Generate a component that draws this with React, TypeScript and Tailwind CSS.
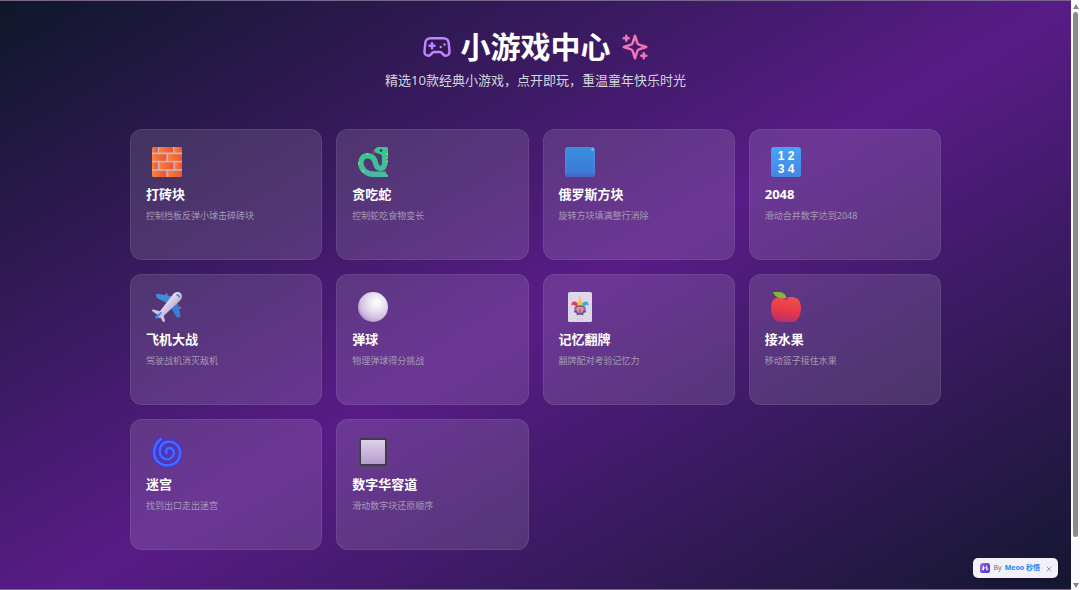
import React from 'react';
import { Gamepad2 } from 'lucide-react';

interface Game {
    id: string;
    title: string;
    description: string;
    icon: React.ReactNode;
}

const iconClass = 'ml-1.5 size-[30px]';

const BrickIcon = () => (
    <svg viewBox="0 0 30 30" className={iconClass} aria-hidden="true">
        <defs>
            <linearGradient id="brick" x1="0" y1="0" x2="1" y2="0">
                <stop offset="0" stopColor="#fb8137" />
                <stop offset="1" stopColor="#ee5236" />
            </linearGradient>
            <clipPath id="brickClip"><rect width="30" height="30" rx="2.5" /></clipPath>
        </defs>
        <g clipPath="url(#brickClip)">
            <rect width="30" height="30" fill="#cbb5c0" />
            <g fill="url(#brick)">
                <rect x="0" y="0" width="5.8" height="5.5" />
                <rect x="7" y="0" width="14" height="5.5" />
                <rect x="22.4" y="0" width="7.6" height="5.5" />
                <rect x="0" y="7.2" width="14.3" height="6.6" />
                <rect x="15.8" y="7.2" width="14.2" height="6.6" />
                <rect x="0" y="15.4" width="5.8" height="6.8" />
                <rect x="7.4" y="15.4" width="14" height="6.8" />
                <rect x="22.8" y="15.4" width="7.2" height="6.8" />
                <rect x="0" y="23.8" width="14.3" height="6.2" />
                <rect x="15.8" y="23.8" width="14.2" height="6.2" />
            </g>
        </g>
    </svg>
);

const SnakeIcon = () => (
    <svg viewBox="0 0 30 30" className={iconClass} aria-hidden="true">
        <defs>
            <linearGradient id="snake" x1="0" y1="0" x2="0" y2="1">
                <stop offset="0" stopColor="#35c98f" />
                <stop offset="1" stopColor="#48b8a0" />
            </linearGradient>
        </defs>
        <path d="M17.5 5l-2.6-1.6M17.5 5l-2.2 1.4" stroke="#e8335c" strokeWidth="1.3" fill="none" />
        <path
            d="M26.600 4V16C26.600 22.500 19.500 23.300 18 17.500C17 12.500 14.500 8.800 9.800 8.800C5 8.800 2.800 12.500 2.800 16C2.800 23 9 27 15 27.300H28"
            fill="none"
            stroke="url(#snake)"
            strokeWidth="5.4"
        />
        <path d="M16.500 3.600C16.500 1.200 18.500 0 21.500 0H28.500C29.500 0 30 .6 30 1.600V9h-6.100C23.500 6.500 17.500 7.400 16.500 3.600z" fill="#36c88f" />
        <path d="M22 24.600l8 3v2.400h-9z" fill="#43bd9b" />
        <path d="M29.200 6v12" stroke="#e4d43c" strokeWidth="1.3" strokeDasharray="1.8 2" />
        <path d="M4.500 23.500l1.500 1.500M.8 15.500v2M8.500 6.800l2-.3" stroke="#c5d747" strokeWidth="1.2" />
        <circle cx="23" cy="3.500" r="1.200" fill="#33264d" />
    </svg>
);

const BlueSquareIcon = () => (
    <svg viewBox="0 0 30 30" className={iconClass} aria-hidden="true">
        <defs>
            <linearGradient id="blueSquare" x1="0" y1="0" x2="0" y2="1">
                <stop offset="0" stopColor="#3a8ee0" />
                <stop offset=".8" stopColor="#3c7cd6" />
                <stop offset="1" stopColor="#4866c6" />
            </linearGradient>
        </defs>
        <rect width="30" height="30" rx="2.8" fill="url(#blueSquare)" />
        <path d="M1 3v24M29 3v24" stroke="#5b93df" strokeOpacity=".5" />
        <circle cx="27.6" cy="2.6" r="1.4" fill="#70b9f5" />
    </svg>
);

const NumbersIcon = () => (
    <svg viewBox="0 0 30 30" className={`${iconClass} font-['Liberation_Sans',sans-serif]`} aria-hidden="true">
        <defs>
            <linearGradient id="numbers" x1="0" y1="0" x2="0" y2="1">
                <stop offset="0" stopColor="#45a4f5" />
                <stop offset="1" stopColor="#4386e4" />
            </linearGradient>
        </defs>
        <rect width="30" height="30" rx="2.8" fill="url(#numbers)" />
        <g fill="#fff" fontSize="12" fontWeight="700" textAnchor="middle">
            <text x="10" y="13">1</text>
            <text x="20" y="13">2</text>
            <text x="10" y="26">3</text>
            <text x="20" y="26">4</text>
        </g>
    </svg>
);

const PlaneIcon = () => (
    <svg viewBox="0 0 30 30" className={iconClass} aria-hidden="true">
        <defs>
            <linearGradient id="plane" x1="0" y1="0" x2="1" y2="1">
                <stop offset=".3" stopColor="#eee5f4" />
                <stop offset=".75" stopColor="#b5a0c9" />
            </linearGradient>
        </defs>
        <path d="M13.5 1.2l2 .2v3l-2-.6zM26.3 14.5l2.6.2v2.4l-2-.3z" fill="#8a7ba2" />
        <path d="M4.2 3.4c-.3-1 .4-1.6 1.4-1.6L20 4.4l-5.6 6.4L5.600 6.200c-.8-.5-1.200-1.600-1.400-2.800z" fill="#3c8ee2" />
        <path d="M25.200 9.400l3.300 13.700c.2 1.200-.4 2.400-1.800 2.500-1.300.2-2.300-.3-2.800-1.300L18.500 15z" fill="#397fd6" />
        <path d="M0 18.500c0-.8.7-1 1.500-.9l7.300 1.900 2.400 2.600 1.700 6.500c.2.8-.2 1.400-1 1.400s-1.200-.6-1.600-1.300L8 24.600l-2.400-1.800-4.300-2.900c-.7-.4-1.200-.8-1.300-1.400z" fill="#cec0df" />
        <path d="M21.500 1.800c2.200-2 5.300-2.300 7.200-.5 1.900 1.900 1.600 4.800-.4 6.900L12.200 23.400c-2 1.800-4.800 2.800-6.100 2.200-1.200-1.100-.1-3.900 1.600-6z" fill="url(#plane)" />
        <path d="M3.400 24.500l5.100-4.400c.8-.4 1.600.4 1.200 1.200l-4.400 5.200c-1.300 1-2.900-.8-1.900-2z" fill="#3c8ee2" />
        <path d="M24.300 2.600c1.700.1 3 1.200 3.300 3" stroke="#3781c4" strokeWidth="1.4" fill="none" />
    </svg>
);

const BallIcon = () => (
    <svg viewBox="0 0 30 30" className={iconClass} aria-hidden="true">
        <defs>
            <radialGradient id="ball" cx=".62" cy=".35" r=".68">
                <stop offset="0" stopColor="#fff" />
                <stop offset=".45" stopColor="#e8dff0" />
                <stop offset=".8" stopColor="#cebfdc" />
                <stop offset="1" stopColor="#b392d2" />
            </radialGradient>
        </defs>
        <circle cx="15" cy="15" r="15" fill="url(#ball)" />
    </svg>
);

const JokerIcon = () => (
    <svg viewBox="0 0 30 30" className={iconClass} aria-hidden="true">
        <rect x="3" width="24" height="30" rx="1.600" fill="#ded7e7" />
        <path d="M14 14C12.600 9.500 8.500 8.500 6.900 10.700L6.300 13.600l2.700-.8 2.200 2.600z" fill="#e23c62" />
        <path d="M16 14c1.400-4.500 5.500-5.500 7.100-3.300l.6 2.900-2.700-.8-2.200 2.600z" fill="#36a9df" />
        <path d="M15 5.500c1.200 2.600 2.500 5 2.600 8.500h-5.200c.1-3.500 1.400-5.900 2.600-8.500z" fill="#f5c343" />
        <path d="M9.500 18l-.6 2.200 2.300.5.8 2.800 2.100-1 .9.8.9-.8 2.100 1 .8-2.800 2.300-.5-.6-2.200z" fill="#58569d" />
        <circle cx="10.500" cy="16.500" r="1.400" fill="#8964a2" />
        <circle cx="19.500" cy="16.500" r="1.400" fill="#8964a2" />
        <circle cx="15" cy="17.500" r="3.400" fill="#ef8d91" />
        <path d="M11.400 14.200c2.200-1.200 5-1.200 7.200 0v1.300c-2.200-1-5-1-7.200 0z" fill="#6558a1" />
        <circle cx="15" cy="17.800" r=".9" fill="#d93250" />
        <path d="M13.600 19.600c.9.600 1.900.6 2.800 0" stroke="#a12c4d" strokeWidth=".8" fill="none" />
        <circle cx="15" cy="5.500" r=".9" fill="#f5c343" />
        <path d="M12 27h6" stroke="#b8aac7" strokeWidth=".8" strokeDasharray="1 1.5" />
    </svg>
);

const AppleIcon = () => (
    <svg viewBox="0 0 30 30" className={iconClass} aria-hidden="true">
        <defs>
            <linearGradient id="apple" x1=".6" y1="0" x2=".4" y2="1">
                <stop offset="0" stopColor="#f0504e" />
                <stop offset=".6" stopColor="#e6364b" />
                <stop offset="1" stopColor="#b8306c" />
            </linearGradient>
        </defs>
        <path d="M15 6.300c2-1.200 4.500-1.700 7-1.200 5 .8 8 4.600 8 10.300 0 7.600-3.600 14.600-9 14.600H9C3.600 30 0 23 0 15.400 0 9.700 3 5.900 8 5.100c2.500-.5 5 0 7 1.200z" fill="url(#apple)" />
        <path d="M11.500 6.100c2.200.8 4.800.8 7 0-1.800 2.400-5.200 2.400-7 0z" fill="#aa2942" />
        <path d="M2 .2C8.500-.8 14.300.2 15.400 6 9 6.500 4.500 6 2 .2z" fill="#7db93d" />
    </svg>
);

const CycloneIcon = () => {
    const spiral = 'M9 2C1.500 7.500 0 18.500 5.500 24.300C12 30.500 23.500 29.300 27 21.500C30.500 13 25.300 4.800 17 4.800C10.200 4.800 6.800 10.600 8 16C9.300 22 16.300 24.500 20.300 20C23.500 16 21.300 11 17.500 11C14.300 11 13.300 13.800 14.600 16';
    return (
        <svg viewBox="0 0 30 30" className={iconClass} aria-hidden="true" fill="none" strokeLinecap="round">
            <path d={spiral} stroke="#3a38dc" strokeWidth="4.600" />
            <path d={spiral} stroke="#4968ff" strokeWidth="2.400" />
        </svg>
    );
};

const SquareButtonIcon = () => (
    <svg viewBox="0 0 30 30" className={iconClass} aria-hidden="true">
        <defs>
            <linearGradient id="squareButton" x1="0" y1="0" x2="0" y2="1">
                <stop offset="0" stopColor="#ddd2e8" />
                <stop offset="1" stopColor="#b59cce" />
            </linearGradient>
        </defs>
        <rect x=".5" width="29.500" height="30" rx="1.500" fill="#5a4670" />
        <rect x="1.500" y="1" width="27.500" height="28" rx="1" fill="#453851" />
        <rect x="3" y="3" width="24" height="24" fill="url(#squareButton)" />
    </svg>
);

const SparklesIcon = () => (
    <svg
        viewBox="0 0 24 24"
        className="size-[30px] text-[#f472b6]"
        fill="none"
        stroke="currentColor"
        strokeWidth="2"
        strokeLinecap="round"
        strokeLinejoin="round"
        aria-hidden="true"
    >
        <path d="m12 3-1.912 5.813a2 2 0 0 1-1.275 1.275L3 12l5.813 1.912a2 2 0 0 1 1.275 1.275L12 21l1.912-5.813a2 2 0 0 1 1.275-1.275L21 12l-5.813-1.912a2 2 0 0 1-1.275-1.275L12 3Z" />
        <path d="M5 3v4M19 17v4M3 5h4M17 19h4" />
    </svg>
);

const games: Game[] = [
    { id: 'brick', title: '打砖块', description: '控制挡板反弹小球击碎砖块', icon: <BrickIcon /> },
    { id: 'snake', title: '贪吃蛇', description: '控制蛇吃食物变长', icon: <SnakeIcon /> },
    { id: 'tetris', title: '俄罗斯方块', description: '旋转方块填满整行消除', icon: <BlueSquareIcon /> },
    { id: '2048', title: '2048', description: '滑动合并数字达到2048', icon: <NumbersIcon /> },
    { id: 'plane', title: '飞机大战', description: '驾驶战机消灭敌机', icon: <PlaneIcon /> },
    { id: 'pinball', title: '弹球', description: '物理弹球得分挑战', icon: <BallIcon /> },
    { id: 'memory', title: '记忆翻牌', description: '翻牌配对考验记忆力', icon: <JokerIcon /> },
    { id: 'fruit', title: '接水果', description: '移动篮子接住水果', icon: <AppleIcon /> },
    { id: 'maze', title: '迷宫', description: '找到出口走出迷宫', icon: <CycloneIcon /> },
    { id: 'puzzle', title: '数字华容道', description: '滑动数字块还原顺序', icon: <SquareButtonIcon /> },
];

const GameCard = ({ game }: { game: Game }) => (
    <button
        type="button"
        className="flex min-h-[131px] cursor-pointer flex-col items-start rounded-xl border border-white/8 bg-white/12 px-[15px] pt-[17px] pb-4 text-left hover:bg-white/20"
    >
        {game.icon}
        <span className="mt-2 text-[13px] leading-[18px] font-bold text-white">{game.title}</span>
        <span className="mt-1.5 text-[9px] leading-[14px] text-[#a39bb3]">{game.description}</span>
    </button>
);

const MeooBadge = () => (
    <div className="absolute right-[13px] bottom-[11px] flex h-5 items-center rounded-[5px] bg-[#f2f1f8] pr-1.5 pl-[7px] text-[7px] shadow-md">
        <svg viewBox="0 0 20 20" className="mr-1 size-2.5" aria-hidden="true">
            <defs>
                <linearGradient id="meoo" x1="0" y1="0" x2="1" y2="1">
                    <stop offset="0" stopColor="#d07bd0" />
                    <stop offset=".4" stopColor="#6a49dc" />
                    <stop offset="1" stopColor="#5334c4" />
                </linearGradient>
            </defs>
            <rect width="20" height="20" rx="5" fill="url(#meoo)" />
            <path d="M4 14c1.500-2 2.500-5 3-8v8M7 11c3-2 5-2 7-1M13.500 6v8c1 0 2-.5 3-1.500" fill="none" stroke="#fff" strokeWidth="2" strokeLinecap="round" />
        </svg>
        <a href="#meoo" className="flex items-center gap-[3px]">
            <span className="text-gray-500">By</span>
            <span className="font-bold text-[#1a85f0]">Meoo 秒悟</span>
        </a>
        <button type="button" aria-label="关闭" className="ml-1.5 cursor-pointer text-gray-400">
            <svg viewBox="0 0 6 6" className="mt-0.5 size-1.5" stroke="currentColor" strokeWidth="1" aria-hidden="true">
                <path d="M.7.7l4.600 4.600M5.300.7L.7 5.300" />
            </svg>
        </button>
    </div>
);

const PageScrollbar = () => (
    <div className="flex w-[9px] shrink-0 flex-col items-center bg-[#fbfafc] pt-1 pb-0.5" aria-hidden="true">
        <svg viewBox="0 0 6 5" className="h-[5px] w-1.5 fill-[#858585]"><path d="M3 0l3 5H0z" /></svg>
        <div className="mt-[3px] flex w-full flex-1 flex-col items-center">
            <div className="h-[92%] w-[5px] rounded-full bg-[#8b8b8b]" />
        </div>
        <svg viewBox="0 0 6 5" className="h-[5px] w-1.5 fill-[#858585]"><path d="M3 5L0 0h6z" /></svg>
    </div>
);

export default function App() {
    return (
        <div className="flex h-screen overflow-hidden font-['Noto_Sans','Noto_Sans_CJK_SC',sans-serif]">
            <div className="relative flex-1 overflow-hidden border-y border-[#77678f]">
                <main className="min-h-[106vh] bg-linear-to-br/srgb from-[#0f172a] via-[#581c87] to-[#0f172a] px-8 pt-6">
                    <header className="text-center">
                        <h1 className="flex items-center justify-center gap-[9px] text-[30px] leading-[44px] font-bold text-white">
                            <Gamepad2 size={30} className="text-[#c084fc]" aria-hidden="true" />
                            小游戏中心
                            <SparklesIcon />
                        </h1>
                        <p className="mt-0.5 text-[13px] leading-[18px] text-gray-300">
                            精选10款经典小游戏，点开即玩，重温童年快乐时光
                        </p>
                    </header>

                    <section className="mx-auto mt-10 grid max-w-[811px] grid-cols-2 gap-3.5 md:grid-cols-4">
                        {games.map((game) => (
                            <GameCard key={game.id} game={game} />
                        ))}
                    </section>
                </main>
                <MeooBadge />
            </div>
            <PageScrollbar />
        </div>
    );
}
